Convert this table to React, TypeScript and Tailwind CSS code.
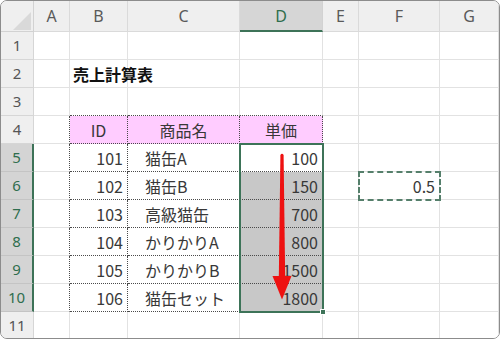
import React from "react";

const COLS = ["A", "B", "C", "D", "E", "F", "G"];

type CellData = { text: string; align: "left" | "right" | "center"; bold?: boolean; indent?: boolean };

const data: Record<string, CellData> = {
  "2B": { text: "売上計算表", align: "left", bold: true },
  "4B": { text: "ID", align: "center" },
  "4C": { text: "商品名", align: "center" },
  "4D": { text: "単価", align: "center" },
  "5B": { text: "101", align: "right" },
  "6B": { text: "102", align: "right" },
  "7B": { text: "103", align: "right" },
  "8B": { text: "104", align: "right" },
  "9B": { text: "105", align: "right" },
  "10B": { text: "106", align: "right" },
  "5C": { text: "猫缶A", align: "left", indent: true },
  "6C": { text: "猫缶B", align: "left", indent: true },
  "7C": { text: "高級猫缶", align: "left", indent: true },
  "8C": { text: "かりかりA", align: "left", indent: true },
  "9C": { text: "かりかりB", align: "left", indent: true },
  "10C": { text: "猫缶セット", align: "left", indent: true },
  "5D": { text: "100", align: "right" },
  "6D": { text: "150", align: "right" },
  "7D": { text: "700", align: "right" },
  "8D": { text: "800", align: "right" },
  "9D": { text: "1500", align: "right" },
  "10D": { text: "1800", align: "right" },
  "6F": { text: "0.5", align: "right" },
};

function Cell({ r, c }: { r: number; c: string }) {
  const inTableCol = c === "B" || c === "C" || c === "D";
  const inTable = r >= 4 && r <= 10 && inTableCol;
  const dottedRight = inTable || (c === "A" && r >= 4 && r <= 10);
  const dottedBottom = inTable || (r === 3 && inTableCol);
  const d = data[`${r}${c}`];
  const pink = r === 4 && inTableCol;
  const selGray = c === "D" && r >= 6 && r <= 10;

  const bg = pink ? "bg-[#ffccff]" : selGray ? "bg-[#c8c8c8]" : "bg-white";
  const right = dottedRight
    ? "border-r border-r-[#4a4a4a] [border-right-style:dotted]"
    : "border-r border-r-[#e2e2e2]";
  const bottom = dottedBottom
    ? "border-b border-b-[#4a4a4a] [border-bottom-style:dotted]"
    : "border-b border-b-[#e2e2e2]";
  const justify = d
    ? d.align === "right"
      ? "justify-end pr-[4px]"
      : d.align === "center"
      ? "justify-center"
      : d.indent
      ? "justify-start pl-[17px]"
      : "justify-start pl-[3px]"
    : "";

  return (
    <div className={`h-[28px] flex items-center ${bg} ${right} ${bottom} ${justify} overflow-visible`}>
      {d && (
        <span
          className={`whitespace-nowrap text-[16px] leading-none relative z-10 ${
            d.bold ? "font-bold text-[#111] text-[16.5px]" : "text-[#383838]"
          }`}
        >
          {d.text}
        </span>
      )}
    </div>
  );
}

export default function App() {
  const rows = Array.from({ length: 11 }, (_, i) => i + 1);
  return (
    <div className="w-[500px] h-[339px] bg-white overflow-hidden">
      <div className="w-[500px] h-[339px] border border-[#8c8c8c] rounded-[7px] overflow-hidden font-['Noto_Sans_CJK_JP','Noto_Sans',sans-serif]">
        <div className="relative grid grid-cols-[33px_36px_58px_112px_83px_36px_81px_1fr]">
          {/* header row */}
          <div className="h-[31px] bg-[#efefef] border-r border-b border-[#d2d2d2] relative">
            <svg className="absolute left-[12px] top-[11px]" width="18" height="18" viewBox="0 0 18 18">
              <polygon points="18,0 18,18 0,18" fill="#d9d9d9" />
            </svg>
          </div>
          {COLS.map((c) =>
            c === "D" ? (
              <div
                key={c}
                className="h-[31px] bg-[#d6d6d6] border-r border-r-[#d2d2d2] border-b-2 border-b-[#3d7358] flex items-center justify-center pt-[1px] text-[16px] text-[#2f6e4e] font-['Noto_Sans',sans-serif]"
              >
                {c}
              </div>
            ) : (
              <div
                key={c}
                className="h-[31px] bg-[#efefef] border-r border-b border-[#dadada] flex items-center justify-center text-[16px] text-[#5a5a5a] font-['Noto_Sans',sans-serif]"
              >
                {c}
              </div>
            )
          )}
          {rows.map((r) => {
            const sel = r >= 5 && r <= 10;
            return (
              <React.Fragment key={r}>
                {sel ? (
                  <div className="h-[28px] bg-[#d4d4d4] border-r-2 border-r-[#3d7358] border-b border-b-[#c4c4c4] flex items-center justify-center text-[15px] text-[#2f6e4e] font-['Noto_Sans',sans-serif]">
                    {r}
                  </div>
                ) : (
                  <div className="h-[28px] bg-[#efefef] border-r border-b border-[#d6d6d6] flex items-center justify-center text-[15px] text-[#555] font-['Noto_Sans',sans-serif]">
                    {r}
                  </div>
                )}
                {COLS.map((c) => (
                  <Cell key={c} r={r} c={c} />
                ))}
              </React.Fragment>
            );
          })}

          {/* selection D5:D10 */}
          <div className="absolute left-[238px] top-[142px] w-[85px] h-[170px] border-2 border-[#3d7358] pointer-events-none z-20" />
          <div className="absolute left-[319px] top-[308px] w-[6px] h-[6px] bg-[#3d7358] border border-white z-30" />

          {/* copy marquee F6 */}
          <div className="absolute left-[357px] top-[170px] w-[83px] h-[30px] border-2 border-dashed border-[#557f6b] pointer-events-none z-20" />

          {/* red arrow */}
          <svg className="absolute left-0 top-0 z-30 pointer-events-none" width="500" height="339">
            <path d="M279.4 154 Q281 151.5 282.6 154 L284.2 278 L277.8 278 Z" fill="#ee1111" />
            <polygon points="271.5,275 290.5,275 281,298.5" fill="#ee1111" />
          </svg>
        </div>
      </div>
    </div>
  );
}
